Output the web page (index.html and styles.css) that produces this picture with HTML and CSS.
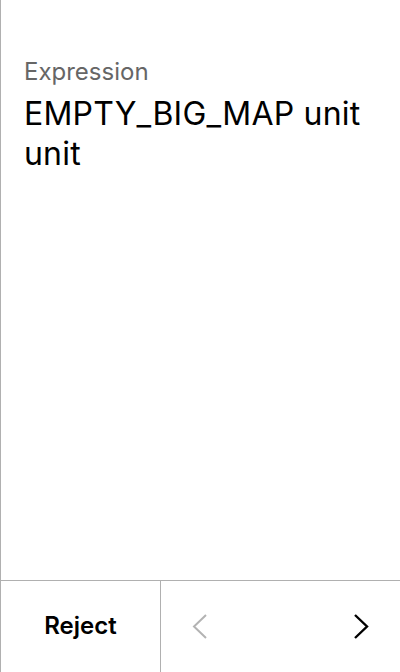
FILE: index.html
```html
<!DOCTYPE html>
<html>
<head>
<meta charset="utf-8">
<link rel="stylesheet" href="styles.css">
</head>
<body>
<div class="screen">
  <main class="content">
    <div class="label">Expression</div>
    <div class="value">EMPTY_BIG_MAP unit unit</div>
  </main>
  <footer class="footer">
    <button class="reject">Reject</button>
    <div class="nav">
      <span class="chev prev">
        <svg width="15" height="25" viewBox="0 0 15 25"><path d="M14 1 L2 12.5 L14 24" fill="none" stroke="#b3b3b3" stroke-width="2"/></svg>
      </span>
      <span class="chev next">
        <svg width="15" height="25" viewBox="0 0 15 25"><path d="M1 1 L13 12.5 L1 24" fill="none" stroke="#000" stroke-width="2.4"/></svg>
      </span>
    </div>
  </footer>
</div>
</body>
</html>
```

FILE: styles.css
```css
html, body { margin: 0; padding: 0; }
body { font-family: Inter, "Noto Sans", sans-serif; background: #fff; }
.screen {
  width: 400px; height: 672px; box-sizing: border-box;
  border-left: 1px solid #b0b0b0;
  display: flex; flex-direction: column;
}
.content { flex: 1; padding: 56px 24px 0 23px; }
.label { font-size: 24px; line-height: 32px; color: #666; }
.value { font-size: 32px; line-height: 40px; letter-spacing: 0.2px; color: #000; margin-top: 6px; }
.footer {
  height: 91px; border-top: 1px solid #b0b0b0;
  display: flex;
}
.reject {
  width: 160px; border: none; border-right: 1px solid #b0b0b0; background: #fff;
  font-family: inherit; font-weight: 600; font-size: 24px; color: #000; padding: 0 0 2px 0;
}
.nav { flex: 1; display: flex; align-items: center; justify-content: space-between; padding: 0 31px 0 31px; }
.chev { display: flex; }
```
